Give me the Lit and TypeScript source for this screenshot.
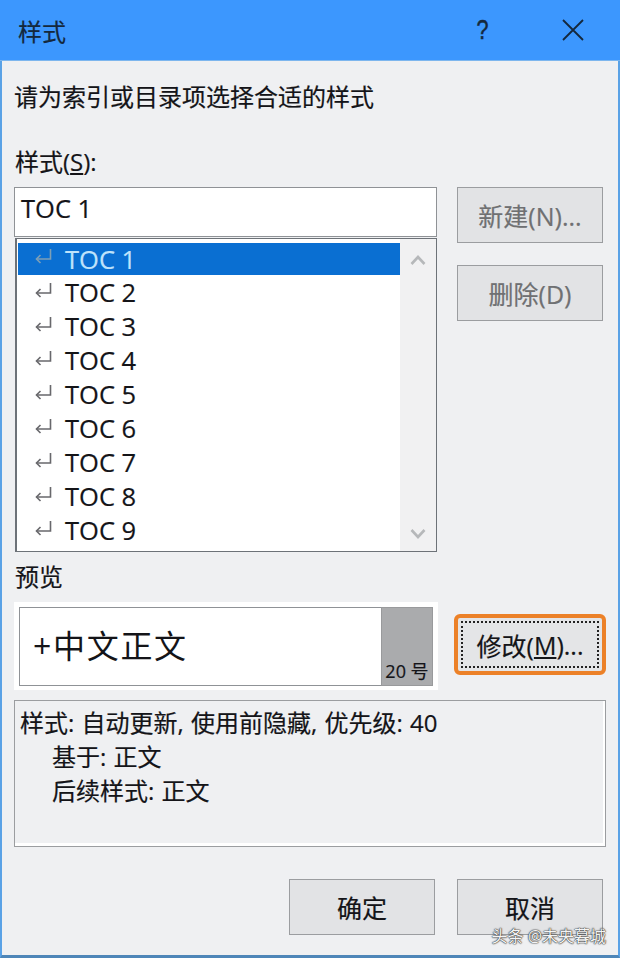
import { LitElement, html, css, svg } from "lit";
import { customElement } from "lit/decorators.js";

const ROWS = [1, 2, 3, 4, 5, 6, 7, 8, 9];

const arrow = svg`<svg class="ret" width="20" height="20" viewBox="0 0 20 20" fill="none" stroke="currentColor" stroke-width="1.6"><path d="M17.5 2V12H3.5"/><path d="M7.5 8L3.5 12L7.5 16"/></svg>`;

@customElement("app-root")
export class AppRoot extends LitElement {
  static styles = css`
    :host {
      display: block;
      width: 620px;
      height: 958px;
      overflow: hidden;
      font-family: "Open Sans", "Noto Sans CJK SC", sans-serif;
      color: #141418;
      font-size: 24px;
      -webkit-text-stroke: 0.2px currentColor;
    }
    .win {
      position: relative;
      height: 958px;
      box-sizing: border-box;
      background: #eff0f2;
      border-left: 2px solid #5aa2e6;
      border-right: 2px solid #5aa2e6;
      border-bottom: 3px solid #4e86b8;
      display: flex;
      flex-direction: column;
    }
    .title {
      height: 61px;
      margin: 0 -2px;
      flex: none;
      background: #3c97fe;
      border-bottom: 1px solid #7db6ee;
      box-sizing: border-box;
      display: flex;
      align-items: center;
      padding: 0 36px 0 18px;
      color: #14283c;
      font-size: 24px;
    }
    .title .name { flex: 1; }
    .help {
      font-size: 27px;
      margin-right: 72px;
      font-family: "Liberation Sans", sans-serif;
      -webkit-text-stroke: 0.5px currentColor;
      transform: scaleX(0.8);
    }
    .body { padding: 0 12px; display: flex; flex-direction: column; }
    .hint { height: 24px; line-height: 24px; margin: 24px 0 0 0; white-space: nowrap; }
    .lab { height: 24px; line-height: 24px; margin: 41px 0 0 1px; white-space: nowrap; }
    u { text-underline-offset: 2px; }
    .main { display: flex; margin-top: 13px; }
    .left { width: 423px; flex: none; }
    .side { margin-left: 20px; display: flex; flex-direction: column; gap: 22px; }
    .input {
      height: 50px;
      box-sizing: border-box;
      background: #fff;
      border: 1px solid #8f9296;
      padding-left: 6px;
      font-size: 25.5px;
      line-height: 40px;
    }
    .list {
      height: 314px;
      margin: 1px 0 0 1px;
      box-sizing: border-box;
      background: #fff;
      border: 1px solid #6d7278;
      border-left-width: 2px;
      padding: 4px 0 0 1px;
      display: flex;
    }
    .rows { width: 382px; flex: none; }
    .row {
      height: 34px;
      display: flex;
      align-items: center;
      gap: 12px;
      padding-left: 15px;
      font-size: 25.5px;
    }
    .row.sel { height: 32px; padding-bottom: 1px; box-sizing: border-box; background: #0a6fd2; color: #bfe3fb; }
    .ret { color: #68686c; flex: none; margin-top: -3px; -webkit-text-stroke: 0; }
    .sel .ret { color: #7d9fb6; }
    .scroll {
      flex: 1;
      background: #f1f1f2;
      margin-top: -4px;
      display: flex;
      flex-direction: column;
      justify-content: space-between;
      align-items: center;
      padding: 16px 0 12px;
      color: #b6b8ba;
    }
    .btn {
      width: 146px;
      height: 56px;
      box-sizing: border-box;
      background: #e2e3e5;
      border: 1px solid #9b9da0;
      display: flex;
      align-items: center;
      justify-content: center;
      white-space: nowrap;
      font-size: 25px;
    }
    .btn.off { color: #6f7072; }
    .prev-lab { margin-top: 13px; }
    .prev-row { display: flex; align-items: flex-start; margin-top: 13px; }
    .sheet {
      width: 424px;
      height: 88px;
      flex: none;
      box-sizing: border-box;
      background: #fff;
      padding: 5px 5px 4px;
      display: flex;
    }
    .sample {
      flex: 1;
      border: 1px solid #8f9296;
      border-right: 0;
      box-sizing: border-box;
      padding: 0 0 6px 13px;
      display: flex;
      align-items: center;
      font-size: 32px;
      letter-spacing: 1.7px;
      white-space: nowrap;
      -webkit-text-stroke: 0;
    }
    .gray {
      width: 52px;
      flex: none;
      background: #aaabad;
      border: 1px solid #999a9c;
      box-sizing: border-box;
      display: flex;
      align-items: flex-end;
      justify-content: center;
      font-size: 18px;
      padding-bottom: 2px;
      white-space: nowrap;
    }
    .focus {
      margin: 12px 0 0 16px;
      width: 152px;
      height: 61px;
      flex: none;
      box-sizing: border-box;
      background: #e4e5e7;
      border: 4px solid #ec8128;
      border-radius: 6px;
      padding: 3px;
    }
    .focus div {
      height: 100%;
      box-sizing: border-box;
      border: 2px dotted #222;
      display: flex;
      align-items: center;
      justify-content: center;
      white-space: nowrap;
      font-size: 25px;
    }
    .desc {
      margin: 10px 0 0 0;
      height: 147px;
      box-sizing: border-box;
      border: 1px solid #9b9da0;
      box-shadow: inset -2px -3px 0 #fff;
      background: #eff0f2;
      padding: 5px 0 0 5px;
      width: 592px;
      line-height: 34px;
      white-space: nowrap;
      word-spacing: 1px;
    }
    .desc .ind { padding-left: 32px; }
    .foot { display: flex; gap: 22px; margin: 32px 0 0 275px; }
    .mark {
      position: absolute;
      right: 12px;
      bottom: 9px;
      font-size: 16px;
      line-height: 20px;
      color: #f4f4f4;
      -webkit-text-stroke: 0;
      text-shadow: 0 0 1px #333, 0 0 1px #333, 0 0 2px #444;
      white-space: nowrap;
    }
  `;

  render() {
    return html`<div class="win">
      <div class="title">
        <span class="name">样式</span>
        <span class="help">?</span>
        <svg width="22" height="22" viewBox="0 0 22 22" fill="none" stroke="#14283c" stroke-width="1.8"><path d="M1 1L21 21M21 1L1 21"/></svg>
      </div>
      <div class="body">
        <div class="hint">请为索引或目录项选择合适的样式</div>
        <div class="lab">样式(<u>S</u>):</div>
        <div class="main">
          <div class="left">
            <div class="input">TOC 1</div>
            <div class="list">
              <div class="rows">
                ${ROWS.map(
                  (n) => html`<div class="row ${n === 1 ? "sel" : ""}">${arrow}<span>TOC ${n}</span></div>`
                )}
              </div>
              <div class="scroll">
                <svg width="16" height="10" viewBox="0 0 16 10" fill="none" stroke="currentColor" stroke-width="2.6"><path d="M1.5 9L8 2L14.5 9"/></svg>
                <svg width="16" height="10" viewBox="0 0 16 10" fill="none" stroke="currentColor" stroke-width="2.6"><path d="M1.5 1L8 8L14.5 1"/></svg>
              </div>
            </div>
          </div>
          <div class="side">
            <div class="btn off">新建(N)...</div>
            <div class="btn off">删除(D)</div>
          </div>
        </div>
        <div class="lab prev-lab">预览</div>
        <div class="prev-row">
          <div class="sheet">
            <div class="sample">+中文正文</div>
            <div class="gray">20 号</div>
          </div>
          <div class="focus"><div>修改(<u>M</u>)...</div></div>
        </div>
        <div class="desc">
          <div>样式: 自动更新, 使用前隐藏, 优先级: 40</div>
          <div class="ind">基于: 正文</div>
          <div class="ind">后续样式: 正文</div>
        </div>
        <div class="foot">
          <div class="btn">确定</div>
          <div class="btn">取消</div>
        </div>
      </div>
      <div class="mark">头条 @未央暮城</div>
    </div>`;
  }
}
